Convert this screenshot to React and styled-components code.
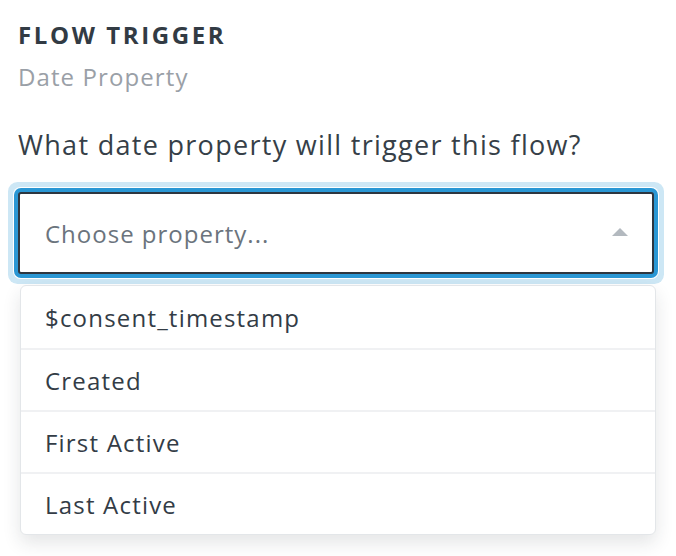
import React from "react";
import styled, { createGlobalStyle } from "styled-components";

const GlobalStyle = createGlobalStyle`
  body {
    margin: 0;
    background: #ffffff;
    font-family: "Open Sans", "Lato", sans-serif;
  }
`;

const Panel = styled.div`
  width: 676px;
  height: 556px;
  box-sizing: border-box;
  padding: 20px 22px 0 18px;
  display: flex;
  flex-direction: column;
  overflow: hidden;
`;

const Title = styled.div`
  font-size: 24px;
  font-weight: 700;
  letter-spacing: 2.6px;
  text-transform: uppercase;
  color: #323b44;
  line-height: 30px;
`;

const Subtitle = styled.div`
  font-size: 24px;
  letter-spacing: 1.1px;
  color: #9aa0a7;
  line-height: 30px;
  margin-top: 12px;
`;

const Question = styled.div`
  font-size: 27px;
  letter-spacing: 1.3px;
  color: #363f48;
  line-height: 32px;
  margin-top: 37px;
`;

const Select = styled.div`
  margin-top: 31px;
  height: 82px;
  box-sizing: border-box;
  border: 2px solid #2d3640;
  border-radius: 3px;
  box-shadow: 0 0 0 4px #2a97d4, 0 0 0 5px #ffffff, 0 0 0 10px #cde7f5;
  display: flex;
  align-items: center;
  justify-content: space-between;
  padding: 0 24px 0 25px;
  background: #fff;
`;

const Placeholder = styled.span`
  font-size: 24px;
  letter-spacing: 1px;
  color: #6b747d;
`;

const Caret = styled.span`
  width: 0;
  height: 0;
  border-left: 8px solid transparent;
  border-right: 8px solid transparent;
  border-bottom: 8px solid #b3b9bf;
  margin-top: -2px;
`;

const Menu = styled.ul`
  list-style: none;
  margin: 11px -2px 0 2px;
  padding: 0;
  background: #fff;
  border: 1px solid #e3e6e9;
  border-radius: 6px;
  box-shadow: 0 8px 18px rgba(30, 40, 50, 0.12);
  overflow: hidden;
`;

const Item = styled.li`
  height: 62px;
  box-sizing: border-box;
  display: flex;
  align-items: center;
  padding-left: 24px;
  font-size: 24px;
  letter-spacing: 1.2px;
  color: #333c46;
  border-top: ${(p) => (p.first ? "none" : "2px solid #f0f1f3")};
`;

const options = ["$consent_timestamp", "Created", "First Active", "Last Active"];

export default function App() {
  return (
    <>
      <GlobalStyle />
      <Panel>
        <Title>Flow Trigger</Title>
        <Subtitle>Date Property</Subtitle>
        <Question>What date property will trigger this flow?</Question>
        <Select>
          <Placeholder>Choose property...</Placeholder>
          <Caret />
        </Select>
        <Menu>
          {options.map((o, i) => (
            <Item key={o} first={i === 0}>
              {o}
            </Item>
          ))}
        </Menu>
      </Panel>
    </>
  );
}
